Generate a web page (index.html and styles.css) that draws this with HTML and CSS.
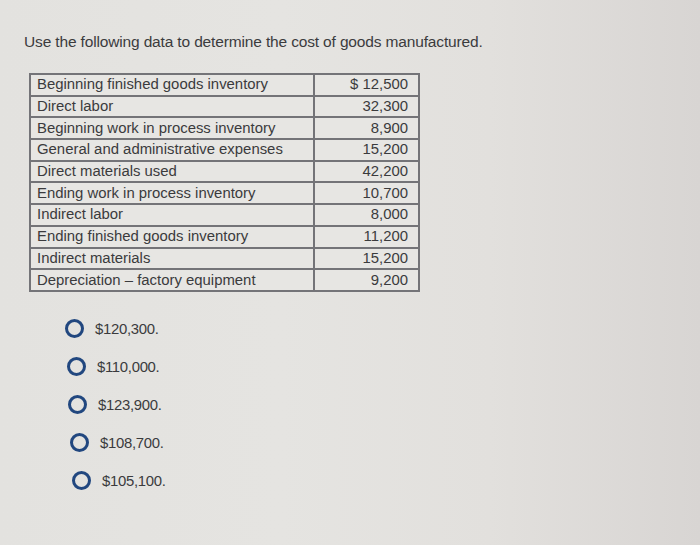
FILE: index.html
```html
<!DOCTYPE html>
<html>
<head>
<meta charset="utf-8">
<link rel="stylesheet" href="styles.css">
</head>
<body>
<main class="page">
  <p class="question">Use the following data to determine the cost of goods manufactured.</p>
  <table class="data">
    <tr><td class="label">Beginning finished goods inventory</td><td class="num">$ 12,500</td></tr>
    <tr><td class="label">Direct labor</td><td class="num">32,300</td></tr>
    <tr><td class="label">Beginning work in process inventory</td><td class="num">8,900</td></tr>
    <tr><td class="label">General and administrative expenses</td><td class="num">15,200</td></tr>
    <tr><td class="label">Direct materials used</td><td class="num">42,200</td></tr>
    <tr><td class="label">Ending work in process inventory</td><td class="num">10,700</td></tr>
    <tr><td class="label">Indirect labor</td><td class="num">8,000</td></tr>
    <tr><td class="label">Ending finished goods inventory</td><td class="num">11,200</td></tr>
    <tr><td class="label">Indirect materials</td><td class="num">15,200</td></tr>
    <tr><td class="label">Depreciation – factory equipment</td><td class="num">9,200</td></tr>
  </table>
  <ul class="options">
    <li class="option"><span class="radio"></span><span class="opt-text">$120,300.</span></li>
    <li class="option"><span class="radio"></span><span class="opt-text">$110,000.</span></li>
    <li class="option"><span class="radio"></span><span class="opt-text">$123,900.</span></li>
    <li class="option"><span class="radio"></span><span class="opt-text">$108,700.</span></li>
    <li class="option"><span class="radio"></span><span class="opt-text">$105,100.</span></li>
  </ul>
</main>
</body>
</html>
```

FILE: styles.css
```css
html, body {
  margin: 0;
  padding: 0;
}
body {
  width: 700px;
  height: 545px;
  overflow: hidden;
  background: linear-gradient(90deg, #e3e2df 0%, #e5e4e1 40%, #e2e0dd 70%, #d8d5d3 100%);
  font-family: "Liberation Sans", Arial, sans-serif;
  color: #3b3b3d;
}
.page {
  padding: 33px 0 0 24px;
}
.question {
  margin: 0;
  font-size: 15.5px;
  line-height: 18px;
  letter-spacing: -0.15px;
}
.data {
  margin: 22px 0 0 5px;
  border-collapse: separate;
  border-spacing: 0;
  border: 1px solid #747478;
  width: 391px;
  font-size: 14.9px;
  background: #e7e6e3;
}
.data td {
  border: 1px solid #747478;
  height: 19.7px;
  padding: 0 6px;
  line-height: 17px;
}
.data .label {
  width: 270px;
}
.data .num {
  text-align: right;
  padding-right: 10px;
}
.options {
  list-style: none;
  margin: 28px 0 0 41px;
  padding: 0;
  display: flex;
  flex-direction: column;
  gap: 20px;
}
.option {
  display: flex;
  align-items: center;
  height: 18px;
  font-size: 14.9px;
}
.option:nth-child(2) { margin-left: 2px; }
.option:nth-child(3) { margin-left: 3px; }
.option:nth-child(4) { margin-left: 5px; }
.option:nth-child(5) { margin-left: 7px; }
.radio {
  box-sizing: border-box;
  width: 19px;
  height: 19px;
  border: 3px solid #21477f;
  border-radius: 50%;
  margin-right: 11px;
}
.opt-text {
  letter-spacing: -0.3px;
}
```
